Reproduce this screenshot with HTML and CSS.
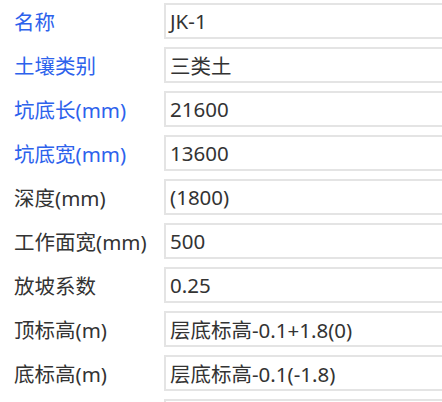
FILE: index.html
```html
<!DOCTYPE html>
<html lang="zh">
<head>
<meta charset="utf-8">
<link rel="stylesheet" href="styles.css">
</head>
<body>
<div class="props">
  <div class="row"><span class="label req">名称</span><div class="value">JK-1</div></div>
  <div class="row"><span class="label req">土壤类别</span><div class="value">三类土</div></div>
  <div class="row"><span class="label req">坑底长(mm)</span><div class="value">21600</div></div>
  <div class="row"><span class="label req">坑底宽(mm)</span><div class="value">13600</div></div>
  <div class="row"><span class="label">深度(mm)</span><div class="value">(1800)</div></div>
  <div class="row"><span class="label">工作面宽(mm)</span><div class="value">500</div></div>
  <div class="row"><span class="label">放坡系数</span><div class="value">0.25</div></div>
  <div class="row"><span class="label">顶标高(m)</span><div class="value">层底标高-0.1+1.8(0)</div></div>
  <div class="row"><span class="label">底标高(m)</span><div class="value">层底标高-0.1(-1.8)</div></div>
  <div class="row"><span class="label"></span><div class="value"></div></div>
</div>
</body>
</html>
```

FILE: styles.css
```css
html, body {
  margin: 0;
  padding: 0;
  background: #ffffff;
}
.props {
  box-sizing: border-box;
  height: 402px;
  overflow: hidden;
  display: flex;
  flex-direction: column;
  gap: 8px;
  padding: 3px 0 0 14px;
  font-family: "Noto Sans", "Noto Sans CJK SC", sans-serif;
  font-size: 20.5px;
}
.row {
  display: grid;
  grid-template-columns: 150px 1fr;
  align-items: center;
  flex: 0 0 36px;
  margin-right: -20px;
}
.label {
  color: #333333;
  white-space: nowrap;
}
.label.req {
  color: #2d62ec;
}
.value {
  box-sizing: border-box;
  height: 36px;
  border: 2px solid #e4e4e4;
  padding: 0 0 0 4px;
  display: flex;
  align-items: center;
  color: #333333;
  white-space: nowrap;
}
```
